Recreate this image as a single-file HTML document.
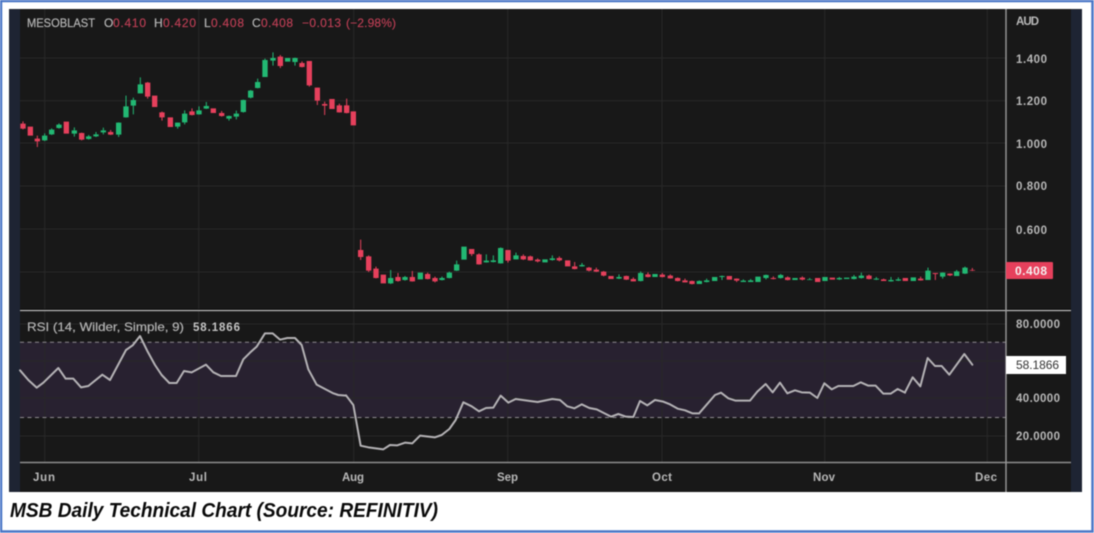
<!DOCTYPE html>
<html><head><meta charset="utf-8"><style>
html,body{margin:0;padding:0;background:#fff;width:1094px;height:533px;overflow:hidden}
svg{display:block;filter:blur(.4px)}
text{font-family:"Liberation Sans",sans-serif;font-size:12px}
.a{fill:#b8b8b8;font-weight:bold;font-size:11.5px;stroke:none}
.r{fill:#bd3f55;stroke:#bd3f55;stroke-width:.15px}
.t{fill:#b4b4b4;stroke:#b4b4b4;stroke-width:.2px}
</style></head><body>
<svg width="1094" height="533" viewBox="0 0 1094 533" xmlns="http://www.w3.org/2000/svg">
<rect x="1" y="1" width="1091.500" height="530.500" fill="#fff" stroke="#4a76c6" stroke-width="2.500"/>
<rect x="9" y="9" width="1073" height="483" fill="#1e2433"/>
<rect x="20" y="9" width="1051" height="483" fill="#181818"/>
<rect x="20" y="342" width="986" height="75.500" fill="#282130"/>
<path d="M20 58H1006M20 100.700H1006M20 143H1006M20 186H1006M20 229H1006M20 272H1006M20 324H1006M20 361H1006M20 398H1006M20 436H1006M44.700 9V310M198.700 9V310M353.700 9V310M507.700 9V310M662 9V310M824.700 9V310M987.300 9V310M44.700 311V462M198.700 311V462M353.700 311V462M507.700 311V462M662 311V462M824.700 311V462M987.300 311V462" stroke="#282828" stroke-width="1" fill="none"/>
<path d="M20 342.300H1006M20 417.500H1006" stroke="#8d8a8f" stroke-width="1" stroke-dasharray="4 3.500" fill="none"/>

<g transform="scale(.33333)" fill="none">
<path stroke="#e6405c" stroke-width="3" d="M69 364V388M112 407V441M245 398V421M332 390V405M443 246V296M486 335V362M576 325V346M665 333V350M841 165V204M906 184V202M928 183V260M952 263V315M974 305V345M1018 311V338M1040 296V340"/>
<path stroke="#e6405c" stroke-width="16" d="M69 371V386M91 380V407M112 416V424M199 365V401M245 399V419M332 396V404M443 248V290M464 287V321M486 337V352M511 352V381M576 334V345M640 325V339M665 339V348M841 170V198M906 189V201M928 183V256M952 263V302M974 312V317M996 297V327M1018 316V337M1040 316V339M1060 334V376"/>
<path stroke="#22b873" stroke-width="3" d="M134 400V423M155 385V405M177 370V386M223 382V410M266 405V419M288 396V411M310 383V403M356 367V411M378 287V353M400 293V343M421 232V280M533 368V386M554 331V373M597 319V344M619 306V327M687 347V362M709 332V358M730 299V338M752 270V295M773 236V265M795 176V231M819 157V197M885 173V197"/>
<path stroke="#22b873" stroke-width="16" d="M134 407V421M155 389V403M177 374V384M223 391V401M266 409V417M288 403V409M310 391V397M356 368V404M378 319V352M400 300V317M421 253V280M533 368V380M554 341V367M597 331V343M619 318V326M687 348V356M709 341V350M730 300V336M752 272V293M773 246V264M795 180V231M819 174V182M863 174V185M885 174V186"/>
</g>
<g transform="translate(340 230) scale(.33333)" fill="none">
<path stroke="#e6405c" stroke-width="3" d="M62 29V90M86 76V126M108 110V145M174 129V155M217 123V155M263 128V148M285 140V157M395 57V78M417 70V104M504 60V98M550 73V90M571 77V92M593 85V97M658 79V94M704 96V118M747 111V124M769 113V126M791 123V139M859 137V150M880 142V154M924 127V142M967 129V142M991 133V146M1013 142V154M1035 146V157M1056 152V163"/>
<path stroke="#e6405c" stroke-width="16" d="M62 60V81M86 79V122M108 116V144M130 134V160M174 141V153M217 141V154M263 132V147M285 144V154M395 57V72M417 73V103M504 60V92M550 78V88M571 79V91M593 89V94M658 84V91M683 91V109M704 109V117M747 113V122M769 119V125M791 125V137M813 138V147M859 138V149M880 147V154M924 133V141M967 134V141M991 137V145M1013 144V153M1035 151V157M1056 153V162"/>
<path stroke="#22b873" stroke-width="3" d="M152 120V162M195 138V152M306 140V151M328 125V145M350 92V123M439 73V98M460 76V97M482 52V101M528 68V88M637 76V92M726 99V110M837 133V147M902 124V154M1078 151V162M1100 146V157"/>
<path stroke="#22b873" stroke-width="16" d="M152 144V160M195 141V150M241 128V148M306 144V150M328 128V144M350 103V122M372 50V89M439 92V97M460 91V96M482 54V100M528 76V88M615 88V97M637 85V90M726 105V109M837 141V146M902 129V153M945 132V141M1078 153V162M1100 151V156"/>
</g>
<g transform="translate(700 230) scale(.33333)" fill="none">
<path stroke="#e6405c" stroke-width="3" d="M110 145V156M220 139V148M263 139V151M307 139V151M507 134V148M551 146V153M662 140V152M706 130V150M750 130V138M817 114V123"/>
<path stroke="#e6405c" stroke-width="16" d="M88 138V149M110 146V152M220 144V147M263 142V150M307 143V149M353 144V156M397 143V149M507 137V147M551 148V153M616 144V153M662 146V151M706 129V132M750 131V136M817 120V122"/>
<path stroke="#22b873" stroke-width="3" d="M66 137V150M130 148V156M152 147V156M198 134V148M242 132V146M329 144V150M418 141V150M462 135V148M484 128V146M529 141V150M573 141V155M595 142V153M684 113V150M728 127V146M770 120V138M795 110V132"/>
<path stroke="#22b873" stroke-width="16" d="M44 141V153M66 138V141M130 152V156M152 151V156M174 140V156M198 135V144M242 135V144M285 144V150M329 148V150M375 141V153M418 144V148M440 143V147M462 140V147M484 137V144M529 146V149M573 150V154M595 148V152M640 142V153M684 122V150M728 128V140M770 124V138M795 113V131"/>
</g>

<g fill="none" stroke="#b4b2b5" stroke-width="6" stroke-linejoin="round" stroke-linecap="round">
<polyline transform="translate(0 300) scale(.33333)" points="60,211 85,240 110,263 130,248 175,204 197,236 220,236 243,262 265,258 307,224 330,240 378,150 398,136 420,108 443,155 465,195 485,225 508,249 530,249 552,213 575,217 618,194 640,217 663,228 708,228 730,178 750,158 770,140 795,100 818,100 840,119 862,114 885,114 905,135 925,208 950,254 1000,280 1015,285 1038,287"/>
<polyline transform="translate(340 330) scale(.33333)" points="18,196 40,225 62,347 85,352 130,358 150,345 172,346 195,338 217,340 240,317 285,322 305,315 328,297 347,270 370,217 395,229 417,244 438,234 460,233 482,197 505,218 527,207 570,213 593,216 637,207 660,210 682,229 703,235 725,223 748,234 770,238 813,260 835,252 858,260 880,261 900,213 922,226 945,210 970,215 990,223 1013,236 1035,241 1057,250 1078,250"/>
<polyline transform="translate(700 380) scale(.33333)" points="0,97 45,45 63,38 85,55 107,62 150,62 172,35 197,12 218,37 240,8 262,40 285,31 305,37 330,38 352,54 373,10 395,28 415,18 460,18 482,7 505,17 527,17 550,41 572,41 593,27 615,38"/>
<polyline transform="translate(700 230) scale(.33333)" points="615,487 638,442 661,469 683,384 705,408 725,408 748,434 793,372 817,404"/>
</g>

<path d="M20 309.500H1071" stroke="#000" stroke-width="1"/>
<path d="M20 310.500H1071" stroke="#bdbdbd" stroke-width="1.300"/>
<path d="M20 462.500H1071" stroke="#8e8e8e" stroke-width="1.500"/>
<path d="M1006 9V492" stroke="#9a9a9a" stroke-width="1.400"/>

<text x="27" y="27" class="t" textLength="68" lengthAdjust="spacingAndGlyphs">MESOBLAST</text>
<text x="104" y="27" class="t">O</text><text x="113" y="27" class="r" textLength="33">0.410</text>
<text x="154" y="27" class="t">H</text><text x="163" y="27" class="r" textLength="33">0.420</text>
<text x="204" y="27" class="t">L</text><text x="211" y="27" class="r" textLength="33">0.408</text>
<text x="252" y="27" class="t">C</text><text x="261" y="27" class="r" textLength="32">0.408</text>
<text x="302" y="27" class="r" textLength="39">−0.013</text>
<text x="346" y="27" class="r" textLength="50">(−2.98%)</text>
<text x="27" y="331" class="t" textLength="157" lengthAdjust="spacingAndGlyphs">RSI (14, Wilder, Simple, 9)</text>
<text x="193" y="331" fill="#c4c4c4" font-weight="bold" style="font-size:11.500px" textLength="47">58.1866</text>

<text x="1016" y="25" class="a" textLength="23">AUD</text>
<text x="1016" y="63" class="a" textLength="31">1.400</text>
<text x="1016" y="105" class="a" textLength="31">1.200</text>
<text x="1016" y="148" class="a" textLength="31">1.000</text>
<text x="1016" y="190" class="a" textLength="31">0.800</text>
<text x="1016" y="234" class="a" textLength="31">0.600</text>
<rect x="1006" y="262" width="47" height="17" rx="1" fill="#e6405c"/>
<text x="1015" y="275" fill="#f5f0f0" font-weight="bold" style="font-size:12px" textLength="32">0.408</text>
<text x="1016" y="328" class="a" textLength="44">80.0000</text>
<rect x="1006" y="356" width="60" height="18" fill="#fff"/>
<text x="1016" y="369" fill="#333" style="font-size:12px" textLength="43">58.1866</text>
<text x="1016" y="402" class="a" textLength="44">40.0000</text>
<text x="1016" y="440" class="a" textLength="44">20.0000</text>

<text x="33" y="481" class="a" textLength="22">Jun</text>
<text x="189" y="481" class="a" textLength="18">Jul</text>
<text x="342" y="481" class="a" textLength="22">Aug</text>
<text x="497" y="481" class="a" textLength="21">Sep</text>
<text x="652" y="481" class="a" textLength="20">Oct</text>
<text x="813" y="481" class="a" textLength="22">Nov</text>
<text x="975" y="481" class="a" textLength="22">Dec</text>

<text x="10" y="517" fill="#0a0a0a" font-weight="bold" font-style="italic" style="font-size:20px" textLength="428" lengthAdjust="spacingAndGlyphs">MSB Daily Technical Chart (Source: REFINITIV)</text>
</svg>
</body></html>
